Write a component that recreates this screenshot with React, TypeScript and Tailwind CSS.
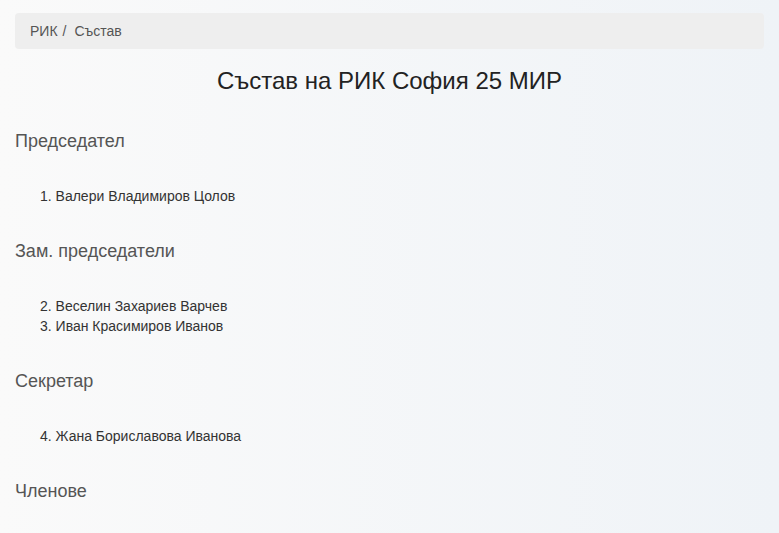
export default function App() {
  const sections = [
    { title: "Председател", start: 1, people: ["Валери Владимиров Цолов"] },
    { title: "Зам. председатели", start: 2, people: ["Веселин Захариев Варчев", "Иван Красимиров Иванов"] },
    { title: "Секретар", start: 4, people: ["Жана Бориславова Иванова"] },
    { title: "Членове", start: 5, people: [] as string[] },
  ];

  return (
    <main className="min-h-[533px] bg-gradient-to-r from-[#fafafa] to-[#eff3f7] px-[15px] pt-[13px] font-['Liberation_Sans',Arial,sans-serif]">
      <div className="flex h-[36px] items-center rounded-[4px] bg-[#eeeeee] px-[15px] text-[14px] text-[#555]">
        <span>РИК</span>
        <span className="px-[5px]">/</span>
        <span className="pl-[3px]">Състав</span>
      </div>

      <h1 className="mt-[19px] text-center text-[24px] leading-[26px] text-[#222]">Състав на РИК София 25 МИР</h1>

      <div className="mt-[37px]">
        {sections.map((s) => (
          <section key={s.title} className="mb-[35px]">
            <h4 className="text-[18px] leading-[20px] text-[#555]">{s.title}</h4>
            {s.people.length > 0 && (
              <ol start={s.start} className="mt-[35px] list-inside list-decimal pl-[25px] text-[14px] leading-[20px] text-[#333]">
                {s.people.map((p) => (
                  <li key={p}>{p}</li>
                ))}
              </ol>
            )}
          </section>
        ))}
      </div>
    </main>
  );
}
